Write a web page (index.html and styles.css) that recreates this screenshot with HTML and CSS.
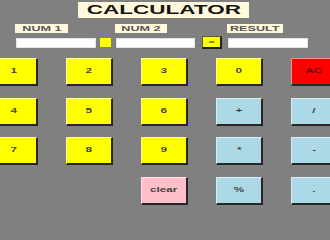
FILE: index.html
```html
<!DOCTYPE html>
<html lang="en">
<head>
<meta charset="utf-8">
<title>Calculator</title>
<link rel="stylesheet" href="styles.css">
</head>
<body>
<div class="calc">
  <header class="title-row">
    <h1 class="title"><span class="sx">CALCULATOR</span></h1>
  </header>
  <div class="labels">
    <span class="label l1"><span class="sx">NUM 1</span></span>
    <span class="label l2"><span class="sx">NUM 2</span></span>
    <span class="label l3"><span class="sx">RESULT</span></span>
  </div>
  <div class="inputs">
    <input class="field f1" type="text">
    <span class="op"></span>
    <input class="field f2" type="text">
    <button class="eq"><span class="sx">=</span></button>
    <input class="field f3" type="text">
  </div>
  <div class="keys">
    <button class="key num"><span class="sx">1</span></button>
    <button class="key num"><span class="sx">2</span></button>
    <button class="key num"><span class="sx">3</span></button>
    <button class="key num"><span class="sx">0</span></button>
    <button class="key ac"><span class="sx">AC</span></button>
    <button class="key num"><span class="sx">4</span></button>
    <button class="key num"><span class="sx">5</span></button>
    <button class="key num"><span class="sx">6</span></button>
    <button class="key opk"><span class="sx">+</span></button>
    <button class="key opk"><span class="sx">/</span></button>
    <button class="key num"><span class="sx">7</span></button>
    <button class="key num"><span class="sx">8</span></button>
    <button class="key num"><span class="sx">9</span></button>
    <button class="key opk"><span class="sx">*</span></button>
    <button class="key opk"><span class="sx">-</span></button>
    <button class="key clear"><span class="sx">clear</span></button>
    <button class="key opk"><span class="sx">%</span></button>
    <button class="key opk"><span class="sx">.</span></button>
  </div>
</div>
</body>
</html>
```
FILE: styles.css
```css
html, body {
  margin: 0;
  padding: 0;
}
body {
  background: #808080;
  font-family: "Liberation Sans", Arial, sans-serif;
  width: 330px;
  height: 220px;
  overflow: hidden;
}
.sx {
  display: inline-block;
  transform: scaleX(1.8);
}
.title-row {
  display: flex;
  padding: 2px 0 0 78px;
}
.title {
  margin: 0;
  width: 171px;
  height: 16px;
  background: #fff8dc;
  display: flex;
  align-items: center;
  justify-content: center;
  font-size: 12.5px;
  font-weight: bold;
  color: #151515;
  line-height: 1;
}
.labels {
  display: flex;
  margin-top: 6px;
  height: 9px;
}
.label {
  height: 9px;
  background: #fff8dc;
  color: #555;
  font-size: 7px;
  font-weight: bold;
  line-height: 9px;
  display: flex;
  justify-content: center;
}
.l1 { margin-left: 15px; width: 53px; }
.l2 { margin-left: 47px; width: 52px; }
.l3 { margin-left: 60px; width: 56px; }
.inputs {
  display: flex;
  align-items: center;
  margin-top: 3px;
  height: 13px;
}
.field {
  box-sizing: border-box;
  height: 10px;
  padding: 0;
  margin: 0;
  border: 1px solid #e4e4e4;
  background: #fff;
}
.f1 { margin-left: 16px; width: 80px; }
.f2 { margin-left: 5px; width: 79px; }
.f3 { margin-left: 6px; width: 80px; }
.op {
  margin-left: 4px;
  width: 11px;
  height: 9px;
  background: #ffff00;
}
.eq {
  box-sizing: border-box;
  margin: 0 0 0 7px;
  padding: 0;
  width: 20px;
  height: 13px;
  background: #ffff00;
  border-style: solid;
  border-width: 1px 2px 2px 1px;
  border-color: #5a5a3a #222 #222 #5a5a3a;
  font-family: "Liberation Sans", Arial, sans-serif;
  font-size: 6px;
  font-weight: bold;
  color: #333;
  line-height: 1;
}
.keys {
  display: grid;
  grid-template-columns: repeat(5, 47px);
  grid-auto-rows: 28px;
  column-gap: 28px;
  row-gap: 11.5px;
  margin: 9px 0 0 -9px;
}
.key {
  box-sizing: border-box;
  margin: 0;
  padding: 0;
  border-style: solid;
  border-width: 1px 2px 2px 1px;
  border-color: rgba(255,255,255,0.55) #262626 #262626 rgba(255,255,255,0.55);
  font-family: "Liberation Sans", Arial, sans-serif;
  font-size: 6.5px;
  font-weight: bold;
  color: #444;
  line-height: 1;
}
.num { background: #ffff00; }
.ac { background: #ff0000; color: #5a1010; }
.opk { background: #add8e6; }
.clear { background: #ffc0cb; grid-column: 3; }
```
